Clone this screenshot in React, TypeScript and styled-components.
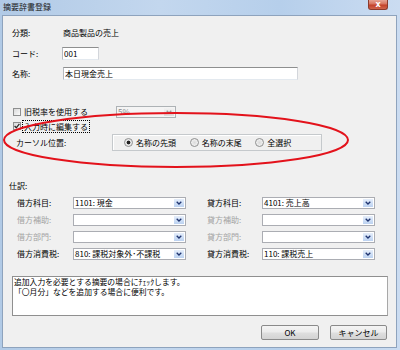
import { Fragment } from "react"
import styled, { createGlobalStyle } from "styled-components"

const GlobalStyle = createGlobalStyle`
  html, body { margin: 0; padding: 0; background: #fff; }
  body {
    font-family: "Noto Sans CJK JP", "Noto Sans", sans-serif;
    font-size: 8px;
    line-height: 12px;
    color: #000;
  }
`

const Window = styled.div`
  position: relative;
  width: 400px;
  height: 350px;
  box-sizing: border-box;
  padding: 0 3px 2px 2px;
  display: flex;
  flex-direction: column;
  overflow: hidden;
  background: linear-gradient(90deg, #b1cae6 0%, #c3d7ee 40%, #b6cfeb 70%, #cbdcf1 100%);
`

const TitleBar = styled.div`
  height: 15px;
  display: flex;
  align-items: flex-start;
  justify-content: space-between;
`

const Title = styled.span`
  padding: 1px 0 0 1px;
  font-size: 8px;
  line-height: 12px;
  color: #1a1a1a;
`

const CloseButton = styled.div`
  width: 20px;
  height: 10px;
  margin-right: 9px;
  box-sizing: border-box;
  border: 1px solid #8b3a2c;
  border-top: none;
  border-radius: 0 0 3px 3px;
  background: linear-gradient(#e6a393 0%, #d7735e 45%, #c2412a 55%, #d0644c 100%);
  color: #fff;
  font: bold 8px "DejaVu Sans", sans-serif;
  line-height: 9px;
  text-align: center;
`

const Client = styled.div`
  flex: 1;
  display: flex;
  flex-direction: column;
  background: #f0f0f0;
  border: 1px solid #8ea3bd;
  padding: 0 8px 0 9px;
`

const Row = styled.div<{ $mt: number; $h?: number; $indent?: number }>`
  display: flex;
  align-items: center;
  height: ${p => p.$h ?? 13}px;
  margin-top: ${p => p.$mt}px;
  padding-left: ${p => p.$indent ?? 0}px;
`

const FieldLabel = styled.span<{ $w?: number; $disabled?: boolean }>`
  flex: none;
  width: ${p => (p.$w ? `${p.$w}px` : "auto")};
  color: ${p => (p.$disabled ? "#a3a3a3" : "#000")};
  white-space: nowrap;
`

const TextInput = styled.input<{ $w: number }>`
  width: ${p => p.$w}px;
  height: 13px;
  box-sizing: border-box;
  padding: 0 1px;
  margin: 0;
  border: 1px solid;
  border-color: #8e8f8f #d3d6db #e3e9ef #b5b9bf;
  background: #fff;
  font: 8px "Noto Sans CJK JP", sans-serif;
  line-height: 11px;
  color: #000;
  outline: none;
`

const CheckBox = styled.span`
  flex: none;
  width: 8px;
  height: 8px;
  box-sizing: border-box;
  margin: 0 3px 0 1px;
  border: 1px solid #8e8f8f;
  background: linear-gradient(135deg, #d9d9d9, #fbfbfb);
  display: inline-flex;
  align-items: center;
  justify-content: center;
`

const FocusText = styled.span`
  outline: 1px dotted #000;
  outline-offset: 0;
  padding: 0 1px;
  margin-left: -1px;
  line-height: 11px;
`

const SelectBox = styled.div<{ $w: number; $disabled?: boolean }>`
  flex: none;
  width: ${p => p.$w}px;
  height: 12px;
  box-sizing: border-box;
  display: flex;
  align-items: stretch;
  border: 1px solid ${p => (p.$disabled ? "#adb2b5" : "#abadb3")};
  background: ${p => (p.$disabled ? "#f4f4f4" : "#fff")};
  color: ${p => (p.$disabled ? "#8a8a8a" : "#000")};
`

const SelectText = styled.span`
  flex: 1;
  padding-left: 1px;
  line-height: 10px;
  white-space: nowrap;
  overflow: hidden;
`

const DropButton = styled.span<{ $disabled?: boolean }>`
  flex: none;
  width: 10px;
  margin: 1px;
  display: flex;
  align-items: center;
  justify-content: center;
  background: ${p =>
    p.$disabled
      ? "linear-gradient(#f2f2f2, #dcdcdc)"
      : "linear-gradient(#e6eefa 0%, #d0e0f6 50%, #bcd2f1 100%)"};
`

const GroupBox = styled.div`
  margin-left: auto;
  margin-right: 66px;
  width: 210px;
  height: 17px;
  box-sizing: border-box;
  display: flex;
  align-items: center;
  padding-left: 11px;
  border: 1px solid #c5c9cc;
  box-shadow: inset 1px 1px 0 #fff;
`

const RadioItem = styled.label`
  width: 72px;
  display: flex;
  align-items: center;
  white-space: nowrap;
`

const Radio = styled.span<{ $checked?: boolean }>`
  flex: none;
  width: 7px;
  height: 7px;
  margin-right: 3px;
  border-radius: 50%;
  border: 1px solid #8e8f8f;
  background: ${p =>
    p.$checked
      ? "radial-gradient(circle, #222 0 1.6px, #e2e2e2 2.2px, #f8f8f8 100%)"
      : "radial-gradient(circle, #dadada 0, #fafafa 100%)"};
`

const SectionLabel = styled.span`
  margin-left: -3px;
`

const EntryGrid = styled.div`
  margin-top: 5px;
  padding-left: 5px;
  display: grid;
  grid-template-columns: 56px 134px 55px 113px;
  grid-auto-rows: 12px;
  row-gap: 5px;
  align-items: center;
`

const Memo = styled.div`
  margin-top: 16px;
  height: 40px;
  box-sizing: border-box;
  padding: 0 1px;
  border: 1px solid #8f8f8f;
  border-right-color: #a8a8a8;
  background: #fff;
  line-height: 10px;
  font-size: 7.8px;
  white-space: pre;
`

const ButtonBar = styled.div`
  margin-top: 9px;
  display: flex;
  justify-content: flex-end;
  gap: 11px;
  padding-right: 1px;
`

const PushButton = styled.button<{ $w: number }>`
  width: ${p => p.$w}px;
  height: 15px;
  padding: 0;
  border: 1px solid #8a8a8a;
  border-radius: 2px;
  background: linear-gradient(#f4f4f4 0%, #ececec 45%, #dedede 55%, #d3d3d3 100%);
  font: 8px "Noto Sans CJK JP", sans-serif;
  color: #000;
`

const Annotation = styled.svg`
  position: absolute;
  left: 0;
  top: 0;
  pointer-events: none;
`

const Chevron = ({ disabled }: { disabled?: boolean }) => (
  <svg width="6" height="4" viewBox="0 0 6 4">
    <polyline points="0.7,0.7 3,3 5.3,0.7" fill="none" stroke={disabled ? "#9a9a9a" : "#1f3470"} strokeWidth="1.3" />
  </svg>
)

const Check = () => (
  <svg width="6" height="6" viewBox="0 0 6 6">
    <polyline points="0.6,3 2.3,4.8 5.4,0.8" fill="none" stroke="#2b2b2b" strokeWidth="1.3" />
  </svg>
)

const Select = ({ w, text, disabled }: { w: number; text?: string; disabled?: boolean }) => (
  <SelectBox $w={w} $disabled={disabled}>
    <SelectText>{text}</SelectText>
    <DropButton $disabled={disabled}><Chevron disabled={disabled} /></DropButton>
  </SelectBox>
)

const entries = [
  { left: "借方科目:", lv: "1101: 現金", right: "貸方科目:", rv: "4101: 売上高", dim: false },
  { left: "借方補助:", lv: "", right: "貸方補助:", rv: "", dim: true },
  { left: "借方部門:", lv: "", right: "貸方部門:", rv: "", dim: true },
  { left: "借方消費税:", lv: "810: 課税対象外･不課税", right: "貸方消費税:", rv: "110: 課税売上", dim: false },
]

export default function App() {
  return (
    <>
      <GlobalStyle />
      <Window>
        <TitleBar>
          <Title>摘要辞書登録</Title>
          <CloseButton>x</CloseButton>
        </TitleBar>
        <Client>
          <Row $mt={11} $h={12}>
            <FieldLabel $w={51}>分類:</FieldLabel>
            <span>商品製品の売上</span>
          </Row>
          <Row $mt={8}>
            <FieldLabel $w={50}>コード:</FieldLabel>
            <TextInput $w={37} readOnly value="001" />
          </Row>
          <Row $mt={7}>
            <FieldLabel $w={51}>名称:</FieldLabel>
            <TextInput $w={235} readOnly value="本日現金売上" />
          </Row>
          <Row $mt={26} $h={12}>
            <CheckBox />
            <FieldLabel $w={92}>旧税率を使用する</FieldLabel>
            <Select w={60} text="5%" disabled />
          </Row>
          <Row $mt={2} $h={12}>
            <CheckBox><Check /></CheckBox>
            <FocusText>入力時に編集する</FocusText>
          </Row>
          <Row $mt={2} $h={17} $indent={4}>
            <FieldLabel>カーソル位置:</FieldLabel>
            <GroupBox>
              <RadioItem><Radio $checked />名称の先頭</RadioItem>
              <RadioItem><Radio />名称の末尾</RadioItem>
              <RadioItem><Radio />全選択</RadioItem>
            </GroupBox>
          </Row>
          <Row $mt={29} $h={12}>
            <SectionLabel>仕訳:</SectionLabel>
          </Row>
          <EntryGrid>
            {entries.map(e => (
              <Fragment key={e.left}>
                <FieldLabel $disabled={e.dim}>{e.left}</FieldLabel>
                <Select w={113} text={e.lv} />
                <FieldLabel $disabled={e.dim}>{e.right}</FieldLabel>
                <Select w={113} text={e.rv} />
              </Fragment>
            ))}
          </EntryGrid>
          <Memo>{"追加入力を必要とする摘要の場合にﾁｪｯｸします。\n「〇月分」などを追加する場合に便利です。"}</Memo>
          <ButtonBar>
            <PushButton $w={58}>OK</PushButton>
            <PushButton $w={57}>キャンセル</PushButton>
          </ButtonBar>
        </Client>
        <Annotation width="400" height="350" viewBox="0 0 400 350">
          <ellipse cx="176" cy="140" rx="172" ry="27" fill="none" stroke="#e3121b" strokeWidth="2" />
        </Annotation>
      </Window>
    </>
  )
}
